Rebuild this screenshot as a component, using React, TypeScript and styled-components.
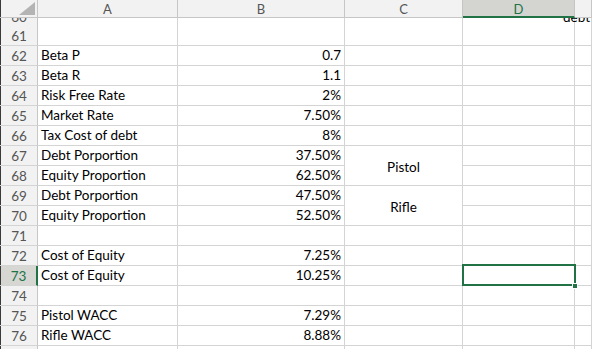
import React from 'react';
import styled, { createGlobalStyle, css } from 'styled-components';

const GREEN = '#217346';
const GRID = '#d4d4d4';

const GlobalStyle = createGlobalStyle`
  body {
    margin: 0;
    background: #fff;
    overflow: hidden;
    font-family: Lato, "Liberation Sans", sans-serif;
  }
`;

const Sheet = styled.div`
  display: grid;
  grid-template-columns: 38px 140px 167px 118px 112px 1fr;
  grid-template-rows: 18px 8px repeat(18, 20px);
  width: 592px;
  height: 349px;
  overflow: hidden;
  font-size: 13.5px;
  color: #000;
`;

const HeadBase = css`
  box-sizing: border-box;
  background: #f2f2f2;
  color: #555;
  display: flex;
  align-items: center;
  justify-content: center;
  overflow: hidden;
`;

const Corner = styled.div`
  ${HeadBase};
  position: relative;
  border-right: 1px solid #c6c6c6;
  border-bottom: 1px solid #c6c6c6;
  box-shadow: inset 1px 0 #3a3a3a;
  &::after {
    content: '';
    position: absolute;
    right: 2px;
    bottom: 2px;
    border-style: solid;
    border-width: 0 0 13px 16px;
    border-color: transparent transparent #b4b4b4 transparent;
  }
`;

const ColHead = styled.div<{ $active?: boolean }>`
  ${HeadBase};
  border-right: 1px solid #c6c6c6;
  border-bottom: 1px solid #c6c6c6;
  font-size: 13px;
  padding-top: 1px;
  position: relative;
  z-index: 2;
  ${({ $active }) =>
    $active &&
    css`
      background: #d4d4d1;
      color: ${GREEN};
      border-bottom: 2px solid ${GREEN};
    `}
`;

const RowHead = styled.div<{ $active?: boolean; $clip?: boolean }>`
  ${HeadBase};
  border-right: 1px solid #c6c6c6;
  border-bottom: ${({ $clip }) => ($clip ? 'none' : `1px solid ${GRID}`)};
  box-shadow: inset 1px 0 #3a3a3a;
  font-size: 13.5px;
  padding-left: 1px;
  align-items: ${({ $clip }) => ($clip ? 'flex-end' : 'center')};
  ${({ $active }) =>
    $active &&
    css`
      background: #d6d6d3;
      color: ${GREEN};
      border-right: 2px solid ${GREEN};
    `}
`;

const ClipLine = styled.span`
  display: block;
  flex-shrink: 0;
  height: 20px;
  line-height: 20px;
  margin-bottom: -1px;
`;

const Cell = styled.div<{ $align?: 'left' | 'right' | 'center'; $clip?: boolean }>`
  box-sizing: border-box;
  border-right: 1px solid ${GRID};
  border-bottom: ${({ $clip }) => ($clip ? 'none' : `1px solid ${GRID}`)};
  display: flex;
  align-items: flex-end;
  justify-content: ${({ $align }) =>
    $align === 'right' ? 'flex-end' : $align === 'center' ? 'center' : 'flex-start'};
  padding: 0 3px 2px 3px;
  line-height: 16px;
  white-space: nowrap;
  overflow: hidden;
`;

/* text spilling out of D60 into E60, cut at the top by the header */
const SpillCell = styled(Cell)`
  overflow: visible;
  clip-path: inset(0 -40px 0 0);
  padding: 0 0 0 100px;
  position: relative;
  z-index: 1;
`;

const Merged = styled(Cell)<{ $span: number }>`
  grid-row: span ${({ $span }) => $span};
  align-items: center;
  padding-bottom: 0;
  padding-top: 2px;
`;

const Selected = styled(Cell)`
  position: relative;
  overflow: visible;
  &::before {
    content: '';
    position: absolute;
    left: -1px;
    top: -2px;
    width: 114px;
    height: 22px;
    box-sizing: border-box;
    border: 2px solid ${GREEN};
    pointer-events: none;
  }
  &::after {
    content: '';
    position: absolute;
    right: -3px;
    bottom: -3px;
    width: 4px;
    height: 4px;
    background: ${GREEN};
    outline: 1px solid #fff;
  }
`;

type Row = {
  n?: number;
  a?: string;
  b?: string;
  c?: string;
  span?: number;
  skipC?: boolean;
  selected?: boolean;
};

const rows: Row[] = [
  { n: 61 },
  { n: 62, a: 'Beta P', b: '0.7' },
  { n: 63, a: 'Beta R', b: '1.1' },
  { n: 64, a: 'Risk Free Rate', b: '2%' },
  { n: 65, a: 'Market Rate', b: '7.50%' },
  { n: 66, a: 'Tax Cost of debt', b: '8%' },
  { n: 67, a: 'Debt Porportion', b: '37.50%', c: 'Pistol', span: 2 },
  { n: 68, a: 'Equity Proportion', b: '62.50%', skipC: true },
  { n: 69, a: 'Debt Porportion', b: '47.50%', c: 'Rifle', span: 2 },
  { n: 70, a: 'Equity Proportion', b: '52.50%', skipC: true },
  { n: 71 },
  { n: 72, a: 'Cost of Equity', b: '7.25%' },
  { n: 73, a: 'Cost of Equity', b: '10.25%', selected: true },
  { n: 74 },
  { n: 75, a: 'Pistol WACC', b: '7.29%' },
  { n: 76, a: 'Rifle WACC', b: '8.88%' },
  {},
];

export default function App() {
  return (
    <>
      <GlobalStyle />
      <Sheet>
        <Corner />
        <ColHead>A</ColHead>
        <ColHead>B</ColHead>
        <ColHead>C</ColHead>
        <ColHead $active>D</ColHead>
        <ColHead />

        <RowHead $clip>
          <ClipLine>60</ClipLine>
        </RowHead>
        <Cell $clip />
        <Cell $clip />
        <Cell $clip />
        <SpillCell $clip>
          <ClipLine>debt</ClipLine>
        </SpillCell>
        <Cell $clip />

        {rows.map((r, i) => (
          <React.Fragment key={i}>
            <RowHead $active={r.selected}>{r.n}</RowHead>
            <Cell>{r.a}</Cell>
            <Cell $align="right">{r.b}</Cell>
            {r.span ? (
              <Merged $span={r.span} $align="center">
                {r.c}
              </Merged>
            ) : r.skipC ? null : (
              <Cell />
            )}
            {r.selected ? <Selected /> : <Cell />}
            <Cell />
          </React.Fragment>
        ))}
      </Sheet>
    </>
  );
}
